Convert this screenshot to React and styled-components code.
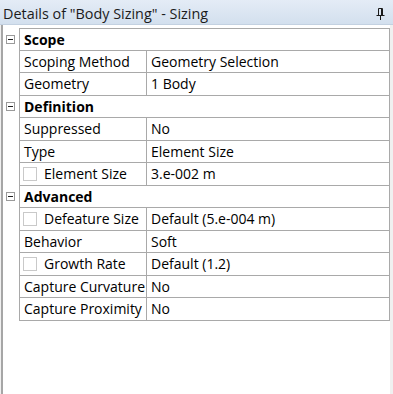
import React from 'react';
import styled, { createGlobalStyle } from 'styled-components';

const GlobalStyle = createGlobalStyle`
  html, body {
    margin: 0;
    padding: 0;
    background: #f0f0f0;
  }
  * {
    box-sizing: border-box;
  }
`;

const Panel = styled.div`
  width: 393px;
  height: 394px;
  display: flex;
  flex-direction: column;
  font-family: 'Open Sans', 'Noto Sans', sans-serif;
  font-size: 14px;
  color: #000;
  overflow: hidden;
`;

const TitleBar = styled.div`
  height: 25px;
  flex: none;
  display: flex;
  align-items: center;
  justify-content: space-between;
  padding: 3px 8px 0 3px;
  background: linear-gradient(#e4ecf6, #d3e0ee);
  border-bottom: 1px solid #c3d1e1;
  color: #1b1b1b;
  font-size: 14.4px;
  white-space: nowrap;
`;

const Content = styled.div`
  flex: 1;
  display: flex;
  padding-left: 1px;
  padding-right: 3px;
`;

const Body = styled.div`
  flex: 1;
  background: #fff;
  border-left: 2px solid #a6a6a6;
  padding-top: 3px;
`;

const Row = styled.div`
  height: 22.5px;
  display: flex;
`;

const Expander = styled.div`
  width: 16px;
  flex: none;
  display: flex;
  align-items: center;
  justify-content: center;
  padding-right: 2px;
`;

const MinusBox = styled.div`
  width: 9px;
  height: 9px;
  border: 1px solid #9a9a9a;
  background: #fff;
  display: flex;
  align-items: center;
  justify-content: center;

  &::after {
    content: '';
    width: 5px;
    height: 1px;
    background: #222;
  }
`;

const Cells = styled.div`
  flex: 1;
  display: flex;
  border: 1px solid #a9a9a9;
  border-top-width: ${(p) => (p.$first ? '1px' : '0')};
`;

const GroupLabel = styled.div`
  flex: 1;
  display: flex;
  align-items: center;
  padding-left: 4px;
  font-weight: 700;
`;

const NameCell = styled.div`
  width: 127px;
  flex: none;
  display: flex;
  align-items: center;
  gap: 7px;
  padding-left: 4px;
  border-right: 1px solid #a9a9a9;
  white-space: nowrap;
`;

const ValueCell = styled.div`
  flex: 1;
  display: flex;
  align-items: center;
  padding-left: 4px;
  white-space: nowrap;
`;

const CheckBox = styled.span`
  width: 14px;
  height: 14px;
  flex: none;
  margin-left: -1px;
  border: 1px solid #c9c9c9;
  background: #fff;
`;

const PinIcon = () => (
  <svg width="9" height="12" viewBox="0 0 9 12">
    <g fill="none" stroke="#1a1a1a" strokeWidth="1">
      <path d="M2.5 0.5 H6.5 V7 M2.5 0.5 V7" />
      <path d="M5.5 1 V7" />
      <path d="M0.5 7.5 H8.5" />
      <path d="M4.5 8 V12" />
    </g>
  </svg>
);

const groups = [
  {
    title: 'Scope',
    rows: [
      { name: 'Scoping Method', value: 'Geometry Selection' },
      { name: 'Geometry', value: '1 Body' },
    ],
  },
  {
    title: 'Definition',
    rows: [
      { name: 'Suppressed', value: 'No' },
      { name: 'Type', value: 'Element Size' },
      { name: 'Element Size', value: '3.e-002 m', check: true },
    ],
  },
  {
    title: 'Advanced',
    rows: [
      { name: 'Defeature Size', value: 'Default (5.e-004 m)', check: true },
      { name: 'Behavior', value: 'Soft' },
      { name: 'Growth Rate', value: 'Default (1.2)', check: true },
      { name: 'Capture Curvature', value: 'No' },
      { name: 'Capture Proximity', value: 'No' },
    ],
  },
];

const App = () => {
  return (
    <>
      <GlobalStyle />
      <Panel>
        <TitleBar>
          <span>Details of "Body Sizing" - Sizing</span>
          <PinIcon />
        </TitleBar>
        <Content>
          <Body>
            {groups.map((group, gi) => (
              <React.Fragment key={group.title}>
                <Row>
                  <Expander>
                    <MinusBox />
                  </Expander>
                  <Cells $first={gi === 0}>
                    <GroupLabel>{group.title}</GroupLabel>
                  </Cells>
                </Row>
                {group.rows.map((row) => (
                  <Row key={row.name}>
                    <Expander />
                    <Cells>
                      <NameCell>
                        {row.check && <CheckBox />}
                        {row.name}
                      </NameCell>
                      <ValueCell>{row.value}</ValueCell>
                    </Cells>
                  </Row>
                ))}
              </React.Fragment>
            ))}
          </Body>
        </Content>
      </Panel>
    </>
  );
};

export default App;
